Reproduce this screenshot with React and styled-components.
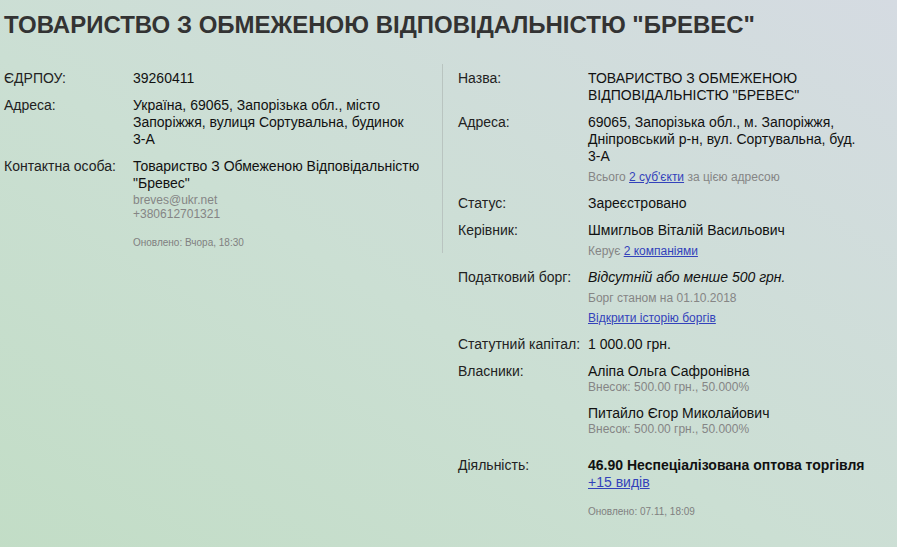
import React from 'react'
import styled, { createGlobalStyle } from 'styled-components'

const GlobalStyle = createGlobalStyle`
  html, body {
    margin: 0;
    padding: 0;
  }
  body {
    min-height: 100vh;
    font-family: "Liberation Sans", Arial, sans-serif;
    color: #1c1c1c;
    background: linear-gradient(32deg, #c2ddc6 0%, #cbdfd3 45%, #d5dbe2 100%);
  }
`

const Page = styled.div`
  padding: 0 15px 0 4px;
  min-height: 547px;
  box-sizing: border-box;
`

const Title = styled.h1`
  margin: 11px 0 25px;
  font-size: 24px;
  line-height: 28px;
  font-weight: bold;
  color: #333;
`

const Columns = styled.div`
  display: grid;
  grid-template-columns: 1fr 1fr;
  align-items: start;
`

const Column = styled.div`
  padding: ${(p) => (p.left ? '6px 15px 4px 0' : '6px 10px 0 15px')};
  border-right: ${(p) => (p.left ? '1px solid #b9c4c0' : 'none')};
`

const Row = styled.div`
  display: grid;
  grid-template-columns: ${(p) => (p.left ? '129px' : '130px')} 1fr;
  margin-bottom: 10px;
  font-size: 14px;
  line-height: 17px;
`

const Label = styled.div`
  color: #222;
`

const Value = styled.div`
  color: #111;
  font-style: ${(p) => (p.italic ? 'italic' : 'normal')};
  font-weight: ${(p) => (p.bold ? 'bold' : 'normal')};
`

const NoWrap = styled.span`
  white-space: nowrap;
`

const Note = styled.div`
  font-size: 12px;
  line-height: ${(p) => (p.tight ? '14px' : '15px')};
  color: #858585;
  margin-top: ${(p) => p.mt || 0}px;
`

const Link = styled.a`
  color: #3342bb;
  text-decoration: underline;
  cursor: pointer;
`

const Owner = styled.div`
  margin-bottom: 11px;
`

const Updated = styled.div`
  font-size: 10px;
  line-height: 12px;
  color: #808080;
  margin-top: ${(p) => p.mt}px;
`

export default function App() {
  return (
    <Page>
      <GlobalStyle />
      <Title>ТОВАРИСТВО З ОБМЕЖЕНОЮ ВІДПОВІДАЛЬНІСТЮ "БРЕВЕС"</Title>
      <Columns>
        <Column left>
          <Row left>
            <Label>ЄДРПОУ:</Label>
            <Value>39260411</Value>
          </Row>
          <Row left>
            <Label>Адреса:</Label>
            <Value>
              Україна, 69065, Запорізька обл., місто Запоріжжя, вулиця Сортувальна, будинок
              <br />
              <NoWrap>3-А</NoWrap>
            </Value>
          </Row>
          <Row left style={{ marginBottom: 0 }}>
            <Label>Контактна особа:</Label>
            <div>
              <Value>Товариство З Обмеженою Відповідальністю "Бревес"</Value>
              <Note tight mt={0.5}>breves@ukr.net</Note>
              <Note tight>+380612701321</Note>
              <Updated mt={16}>Оновлено: Вчора, 18:30</Updated>
            </div>
          </Row>
        </Column>

        <Column>
          <Row>
            <Label>Назва:</Label>
            <Value>ТОВАРИСТВО З ОБМЕЖЕНОЮ ВІДПОВІДАЛЬНІСТЮ "БРЕВЕС"</Value>
          </Row>
          <Row>
            <Label>Адреса:</Label>
            <div>
              <Value>
                69065, Запорізька обл., м. Запоріжжя, Дніпровський р-н, вул. Сортувальна, буд.{' '}
                <NoWrap>3-А</NoWrap>
              </Value>
              <Note mt={5}>
                Всього <Link>2 суб'єкти</Link> за цією адресою
              </Note>
            </div>
          </Row>
          <Row>
            <Label>Статус:</Label>
            <Value>Зареєстровано</Value>
          </Row>
          <Row>
            <Label>Керівник:</Label>
            <div>
              <Value>Шмигльов Віталій Васильович</Value>
              <Note mt={5}>
                Керує <Link>2 компаніями</Link>
              </Note>
            </div>
          </Row>
          <Row>
            <Label>Податковий борг:</Label>
            <div>
              <Value italic>Відсутній або менше 500 грн.</Value>
              <Note mt={5}>Борг станом на 01.10.2018</Note>
              <Note mt={5}>
                <Link>Відкрити історію боргів</Link>
              </Note>
            </div>
          </Row>
          <Row>
            <Label>Статутний капітал:</Label>
            <Value>1 000.00 грн.</Value>
          </Row>
          <Row>
            <Label>Власники:</Label>
            <div>
              <Owner>
                <Value>Аліпа Ольга Сафронівна</Value>
                <Note tight>Внесок: 500.00 грн., 50.000%</Note>
              </Owner>
              <Owner>
                <Value>Питайло Єгор Миколайович</Value>
                <Note tight>Внесок: 500.00 грн., 50.000%</Note>
              </Owner>
            </div>
          </Row>
          <Row>
            <Label>Діяльність:</Label>
            <div>
              <Value bold>46.90 Неспеціалізована оптова торгівля</Value>
              <Link>+15 видів</Link>
              <Updated mt={15}>Оновлено: 07.11, 18:09</Updated>
            </div>
          </Row>
        </Column>
      </Columns>
    </Page>
  )
}
